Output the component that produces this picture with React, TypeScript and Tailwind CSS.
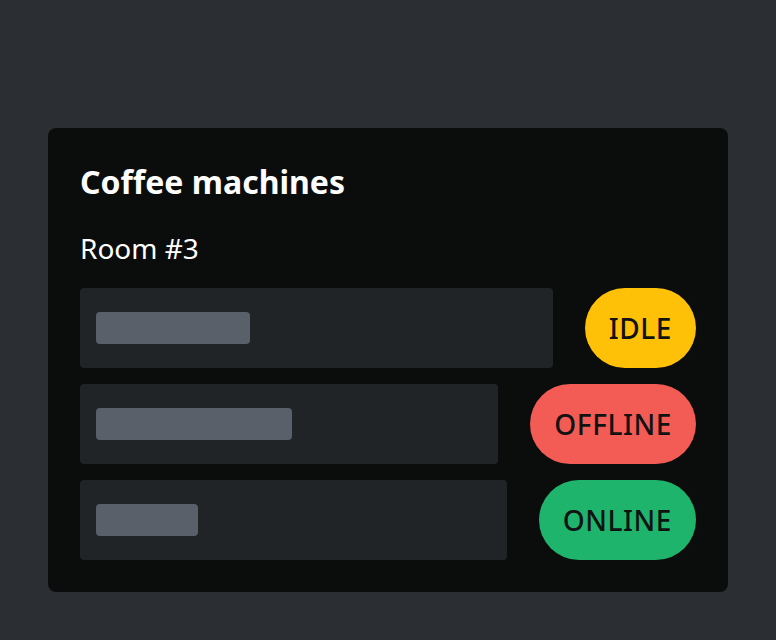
const machines = [
  { status: "IDLE", bar: "w-[154px]", badge: "bg-[#ffc107]" },
  { status: "OFFLINE", bar: "w-[196px]", badge: "bg-[#f25c54]" },
  { status: "ONLINE", bar: "w-[102px]", badge: "bg-[#1eb46b]" },
];

export default function App() {
  return (
    <div className="min-h-screen bg-[#2b2e33] px-12 pt-32 pb-12 font-['Noto_Sans',sans-serif]">
      <div className="rounded-lg bg-[#0b0d0d] p-8">
        <h1 className="text-[32px] font-bold leading-[44px] text-white">Coffee machines</h1>
        <h2 className="mt-6 text-[28px] leading-[40px] text-white">Room #3</h2>
        <div className="mt-5 flex flex-col gap-4">
          {machines.map((m) => (
            <div key={m.status} className="flex items-center gap-8">
              <div className="flex h-20 flex-1 items-center rounded bg-[#212427] px-4">
                <div className={`h-8 rounded bg-[#596069] ${m.bar}`} />
              </div>
              <div className={`flex h-20 items-center rounded-full px-6 text-[28px] font-medium tracking-[0.02em] text-[#111313] ${m.badge}`}>
                {m.status}
              </div>
            </div>
          ))}
        </div>
      </div>
    </div>
  );
}
